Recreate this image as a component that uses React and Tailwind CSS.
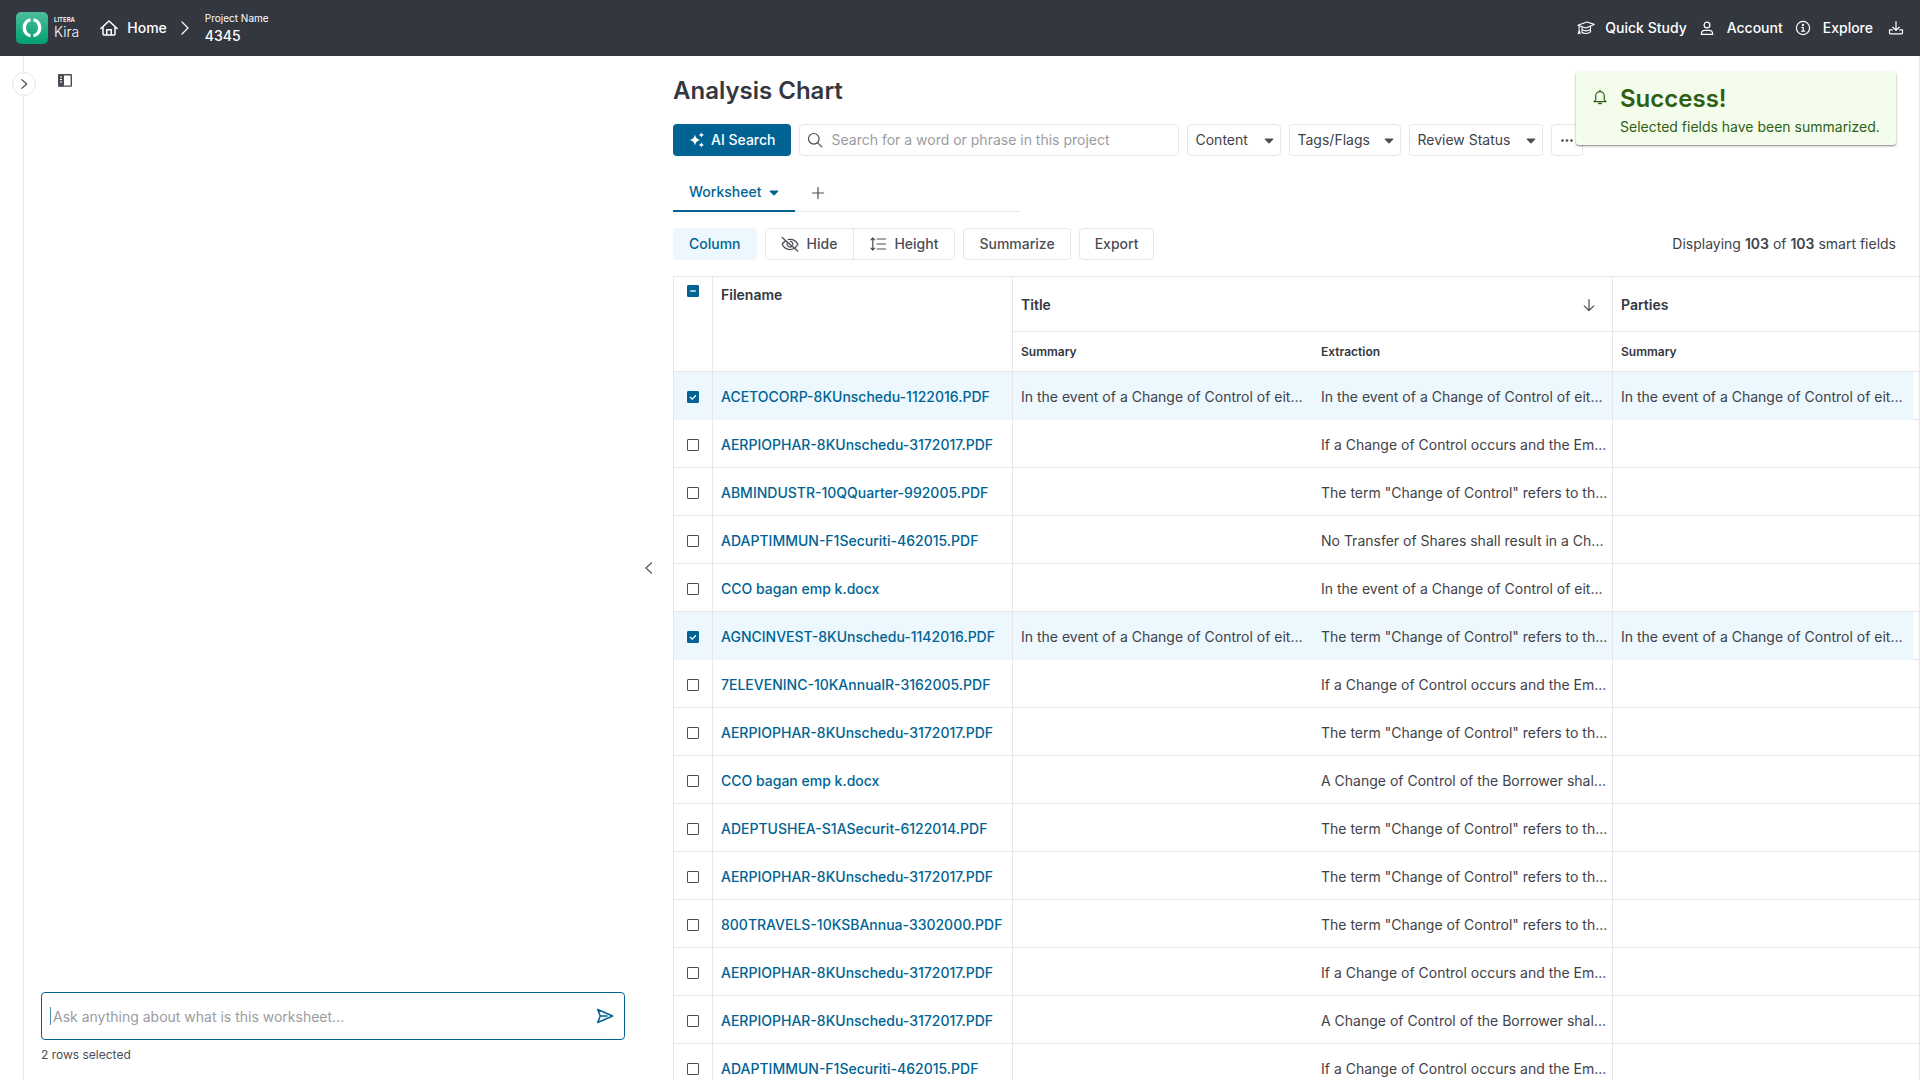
import { useState } from "react";

const rows = [
  { name: "ACETOCORP-8KUnschedu-1122016.PDF", summary: true, text: "In the event of a Change of Control of eit..." },
  { name: "AERPIOPHAR-8KUnschedu-3172017.PDF", text: "If a Change of Control occurs and the Em..." },
  { name: "ABMINDUSTR-10QQuarter-992005.PDF", text: 'The term "Change of Control" refers to th...' },
  { name: "ADAPTIMMUN-F1Securiti-462015.PDF", text: "No Transfer of Shares shall result in a Ch..." },
  { name: "CCO bagan emp k.docx", text: "In the event of a Change of Control of eit..." },
  { name: "AGNCINVEST-8KUnschedu-1142016.PDF", summary: true, text: 'The term "Change of Control" refers to th...' },
  { name: "7ELEVENINC-10KAnnualR-3162005.PDF", text: "If a Change of Control occurs and the Em..." },
  { name: "AERPIOPHAR-8KUnschedu-3172017.PDF", text: 'The term "Change of Control" refers to th...' },
  { name: "CCO bagan emp k.docx", text: "A Change of Control of the Borrower shal..." },
  { name: "ADEPTUSHEA-S1ASecurit-6122014.PDF", text: 'The term "Change of Control" refers to th...' },
  { name: "AERPIOPHAR-8KUnschedu-3172017.PDF", text: 'The term "Change of Control" refers to th...' },
  { name: "800TRAVELS-10KSBAnnua-3302000.PDF", text: 'The term "Change of Control" refers to th...' },
  { name: "AERPIOPHAR-8KUnschedu-3172017.PDF", text: "If a Change of Control occurs and the Em..." },
  { name: "AERPIOPHAR-8KUnschedu-3172017.PDF", text: "A Change of Control of the Borrower shal..." },
  { name: "ADAPTIMMUN-F1Securiti-462015.PDF", text: "If a Change of Control occurs and the Em..." },
];

const summaryText = "In the event of a Change of Control of eit...";

function Icon({ size = 16, children, className = "" }) {
  return (
    <svg
      width={size}
      height={size}
      viewBox="0 0 16 16"
      fill="none"
      stroke="currentColor"
      strokeWidth="1.2"
      strokeLinecap="round"
      strokeLinejoin="round"
      aria-hidden="true"
      className={`shrink-0 ${className}`}
    >
      {children}
    </svg>
  );
}

function Caret({ className = "" }) {
  return (
    <svg width="10" height="6" viewBox="0 0 10 6" aria-hidden="true" className={`shrink-0 ${className}`}>
      <path d="M1.2 0.5h7.6a.6.6 0 0 1 .4 1L5.5 5.3a.7.7 0 0 1-1 0L.8 1.5a.6.6 0 0 1 .4-1z" fill="currentColor" />
    </svg>
  );
}

function Logo() {
  return (
    <div className="flex items-center gap-1.5">
      <svg width="32" height="32" viewBox="0 0 32 32" aria-hidden="true">
        <defs>
          <linearGradient id="logoBg" x1="0" y1="0" x2="0" y2="1">
            <stop offset="0" stopColor="#4dbd9b" />
            <stop offset="1" stopColor="#00a070" />
          </linearGradient>
        </defs>
        <rect width="32" height="32" rx="5" fill="url(#logoBg)" />
        <path
          d="M14.3 6.3C9.8 7 6.6 11 6.6 15.8S9.8 24.5 14.3 25.3L14.8 22.3C11.7 21.6 10 19 10 15.8S11.7 10 14.8 9.3zM17.7 6.3C22.2 7 25.4 11 25.4 15.8S22.2 24.5 17.7 25.3L17.2 22.3C20.3 21.6 22 19 22 15.8S20.3 10 17.2 9.3z"
          fill="#fff"
        />
      </svg>
      <div className="flex flex-col">
        <span className="text-[6px] leading-[8px] font-semibold">LITERA</span>
        <span className="text-sm leading-4 font-light">Kira</span>
      </div>
    </div>
  );
}

function TopBar() {
  return (
    <header className="flex h-14 shrink-0 items-center justify-between bg-[#333740] px-4 text-sm font-medium text-white">
      <div className="flex items-center">
        <Logo />
        <a href="#home" className="ml-5 flex items-center gap-2">
          <Icon size={20}>
            <path d="M1.5 8.4L8 2.4l6.5 6M3.2 7v5.800a.7.7 0 0 0 .7.7h8.200a.7.7 0 0 0 .7-.7V7M6.200 13.400V9.300h3.600v4.100" />
          </Icon>
          Home
        </a>
        <Icon size={16} className="mx-2.5">
          <path d="M5 2l6 6-6 6" />
        </Icon>
        <div className="ml-0.5 flex flex-col">
          <span className="text-[10px] leading-4 font-normal">Project Name</span>
          <span className="leading-5">4345</span>
        </div>
      </div>
      <nav className="flex items-center gap-3">
        <a href="#study" className="flex items-center gap-2.5">
          <Icon size={18}>
            <path
              strokeWidth="1"
              d="M.8 5.600L8.800 2.600l6.500 2.200-7.500 3.200zM1.900 6.200v6.400M1 13l.9-2.500 1 2.500M4.600 7.200l-.3 4.600c1.800 1.600 5.600 1.400 7.700-.3V6.600M4.600 9.600c2.200 1.300 5.200 1 7.400-.5"
            />
          </Icon>
          Quick Study
        </a>
        <a href="#account" className="flex items-center gap-3">
          <Icon size={16}>
            <circle cx="8" cy="5" r="2.900" />
            <path d="M2.300 14.400c0-2.500 1.600-4 3.600-4h4.200c2 0 3.600 1.500 3.600 4z" />
          </Icon>
          Account
        </a>
        <a href="#explore" className="flex items-center gap-3">
          <Icon size={16}>
            <circle cx="8" cy="8" r="6.600" />
            <path d="M6.800 7.300h1.400v3.900M6.600 11.200h3" />
            <circle cx="8" cy="4.900" r=".5" fill="currentColor" />
          </Icon>
          Explore
        </a>
        <button type="button" aria-label="Download" className="ml-[3px]">
          <Icon size={16}>
            <path d="M8 1.500v8.600M4.800 7.200L8 10.300l3.200-3.100M4.300 9.900H1.500v3.200c0 .4.300.7.700.7h11.600c.4 0 .7-.3.700-.7V9.900h-2.800" />
          </Icon>
        </button>
      </nav>
    </header>
  );
}

function ChatPanel({ count }) {
  return (
    <section className="flex w-[601px] shrink-0 flex-col justify-between pl-[17px]">
      <button type="button" aria-label="Toggle panel" className="mt-4 ml-4 self-start text-[#4b4d54]">
        <svg width="16" height="16" viewBox="0 0 16 16" aria-hidden="true">
          <rect x="1.700" y="2.700" width="12.600" height="11.400" rx=".5" fill="none" stroke="currentColor" strokeWidth="1.400" />
          <path fill="currentColor" d="M1.500 2.500h5.500v12h-5.500z" />
          <path stroke="#fff" strokeWidth="1" d="M3 5h2M3 7.500h2M3 10h2" />
        </svg>
      </button>
      <div className="pb-4">
        <div className="flex h-12 items-center rounded border border-[#006394] px-2">
          <span className="h-[18px] w-px shrink-0 bg-[#4a90b5]" />
          <input
            type="text"
            aria-label="Ask about this worksheet"
            placeholder="Ask anything about what is this worksheet..."
            className="ml-0.5 h-8 min-w-0 flex-1 text-sm outline-none placeholder:text-[#9b9c9f]"
          />
          <button type="button" aria-label="Send" className="mr-0.5 text-[#006394]">
            <Icon size={18}>
              <path strokeWidth="1.400" d="M1.500 2.200L14.800 8 1.500 13.800 3.800 8zM3.800 8h6" />
            </Icon>
          </button>
        </div>
        <p className="mt-1.5 text-xs leading-[18px] text-[#4b4d54]">{count} rows selected</p>
      </div>
    </section>
  );
}

function FilterSelect({ label, width }) {
  return (
    <div className={`relative ${width}`}>
      <select
        aria-label={label}
        className="h-8 w-full appearance-none rounded border border-[#e6e6e6] bg-white pl-[7px] text-sm text-[#3f4249]"
      >
        <option>{label}</option>
      </select>
      <Caret className="pointer-events-none absolute top-[14px] right-[7px] text-[#4b4d54]" />
    </div>
  );
}

function SearchRow() {
  return (
    <div className="mt-4 flex gap-2">
      <button
        type="button"
        className="flex h-8 items-center gap-1.5 rounded bg-[#006394] px-4 text-sm font-medium text-white"
      >
        <svg width="16" height="16" viewBox="0 0 16 16" fill="currentColor" aria-hidden="true">
          <path d="M6 2.500C6.900 6 8 7.100 11.300 8 8 8.900 6.900 10 6 13.500 5.100 10 4 8.900.500 8 4 7.100 5.100 6 6 2.500zM12.400.3c.5 1.800.9 2.200 2.700 2.700-1.800.5-2.200.9-2.700 2.700-.5-1.800-.9-2.200-2.700-2.700 1.800-.5 2.200-.9 2.700-2.700zM12.400 10.300c.5 1.800.9 2.200 2.700 2.700-1.800.5-2.200.9-2.700 2.700-.5-1.800-.9-2.200-2.700-2.700 1.800-.5 2.200-.9 2.700-2.700z" />
        </svg>
        AI Search
      </button>
      <label className="flex h-8 w-[380px] items-center gap-2 rounded border border-[#e6e6e6] pl-[7px]">
        <Icon size={16} className="text-[#4b4d54]">
          <circle cx="6.800" cy="6.800" r="5.300" />
          <path d="M10.800 10.800l4 4" />
        </Icon>
        <input
          type="search"
          aria-label="Search project"
          placeholder="Search for a word or phrase in this project"
          className="min-w-0 flex-1 text-sm outline-none placeholder:text-[#9b9c9f]"
        />
      </label>
      <FilterSelect label="Content" width="w-[94px]" />
      <FilterSelect label="Tags/Flags" width="w-28" />
      <FilterSelect label="Review Status" width="w-[134px]" />
      <button
        type="button"
        aria-label="More filters"
        className="flex size-8 items-center justify-center rounded border border-[#e6e6e6] text-[#4b4d54]"
      >
        <svg width="16" height="16" viewBox="0 0 16 16" fill="currentColor" aria-hidden="true">
          <circle cx="3.500" cy="8.500" r="1.300" />
          <circle cx="8" cy="8.500" r="1.300" />
          <circle cx="12.500" cy="8.500" r="1.300" />
        </svg>
      </button>
    </div>
  );
}

function Tabs() {
  return (
    <div className="mt-4 flex h-10 w-[347px] border-b border-[#e6e6e6]">
      <button
        type="button"
        className="-mb-px flex items-center gap-2 border-b-2 border-[#006394] px-4 pt-0.5 text-sm font-medium text-[#006394]"
      >
        Worksheet
        <Caret className="mt-0.5" />
      </button>
      <button type="button" aria-label="Add worksheet" className="px-[15px] pt-0.5 text-[#4b4d54]">
        <Icon size={16}>
          <path d="M8 2.500v11M2.500 8h11" />
        </Icon>
      </button>
    </div>
  );
}

function Toolbar() {
  return (
    <div className="mt-4 flex items-center gap-2 text-sm font-medium text-[#4b4d54]">
      <button type="button" className="h-8 rounded bg-[#ecf8fe] px-4 text-[#006394]">
        Column
      </button>
      <div className="flex h-8 rounded border border-[#e6e6e6]">
        <button type="button" className="flex items-center gap-2 border-r border-[#e6e6e6] pr-4 pl-[15px]">
          <Icon size={18}>
            <path
              strokeWidth="1.100"
              d="M1 2.200l13.800 12M4.300 5C2.700 6 1.600 7.200 1 8.300c1.200 2.500 4 4.600 7 4.600 1.200 0 2.300-.3 3.300-.7M6.400 4c.5-.1 1.100-.2 1.600-.2 3 0 5.800 2 7 4.500-.5 1-1.300 2-2.300 2.800M5.700 6.800c-.9 1.700.2 3.900 2.300 3.900.6 0 1.100-.2 1.500-.5M8.400 5.700a2.500 2.500 0 0 1 2.100 3M7 7.500l1.800 1.700"
            />
          </Icon>
          Hide
        </button>
        <button type="button" className="flex items-center gap-2 px-4">
          <Icon size={16}>
            <path d="M2.800 2v12M1 3.800L2.800 2l1.800 1.800M1 12.200L2.800 14l1.800-1.800M7 3h8.500M7 8h8.500M7 13h8.500" />
          </Icon>
          Height
        </button>
      </div>
      <button type="button" className="h-8 rounded border border-[#e6e6e6] px-[15px]">
        Summarize
      </button>
      <button type="button" className="h-8 rounded border border-[#e6e6e6] px-[15px]">
        Export
      </button>
      <p className="mr-[23px] ml-auto font-normal text-[#3f4249]">
        Displaying <b className="font-semibold">103</b> of <b className="font-semibold">103</b> smart fields
      </p>
    </div>
  );
}

function Checkbox({ checked, indeterminate, onChange, label }) {
  return (
    <label className="relative block size-3">
      <input
        type="checkbox"
        aria-label={label}
        checked={checked}
        onChange={onChange}
        className="peer block size-3 appearance-none rounded-[1px] border border-[#4b4d54] checked:border-[#006394] checked:bg-[#006394]"
      />
      <svg
        width="12"
        height="12"
        viewBox="0 0 12 12"
        fill="none"
        stroke="#fff"
        strokeWidth="1.300"
        aria-hidden="true"
        className="pointer-events-none absolute inset-0 hidden peer-checked:block"
      >
        <path d={indeterminate ? "M3.200 6h5.600" : "M3 6l2.200 2.100L9 4.200"} />
      </svg>
    </label>
  );
}

function Worksheet({ selected, toggle }) {
  const line = "border-[#e6e6e6]";
  return (
    <table className="mt-4 w-full table-fixed border-separate border-spacing-0 text-left text-sm text-[#3f4249]">
      <colgroup>
        <col className="w-[39px]" />
        <col className="w-[300px]" />
        <col className="w-[300px]" />
        <col className="w-[300px]" />
        <col className="w-[301px]" />
        <col />
      </colgroup>
      <thead className="text-[#333740]">
        <tr className="h-14">
          <th rowSpan={2} className={`border-t border-b border-l pt-2 pl-[13px] align-top ${line}`}>
            <Checkbox checked indeterminate onChange={() => {}} label="Select all rows" />
          </th>
          <th rowSpan={2} className={`border-t border-b border-l px-2 pt-2 align-top font-semibold ${line}`}>
            Filename
          </th>
          <th colSpan={2} className={`border-t border-b border-l px-2 pt-0.5 font-semibold ${line}`}>
            <div className="flex items-center justify-between pr-[7px]">
              Title
              <button type="button" aria-label="Sort by title" className="text-[#4b4d54]">
                <Icon size={16}>
                  <path d="M8 2.500v11M3.200 8.900L8 13.500l4.800-4.600" />
                </Icon>
              </button>
            </div>
          </th>
          <th colSpan={2} className={`border-t border-b border-l px-2 pt-0.5 font-semibold ${line}`}>
            Parties
          </th>
        </tr>
        <tr className="h-10 text-xs">
          <th className={`border-b border-l px-2 font-semibold ${line}`}>Summary</th>
          <th className={`border-b px-[9px] font-semibold ${line}`}>Extraction</th>
          <th colSpan={2} className={`border-b border-l px-2 font-semibold ${line}`}>
            Summary
          </th>
        </tr>
      </thead>
      <tbody>
        {rows.map((row, i) => {
          const on = selected.includes(i);
          const cell = on
            ? "border-b border-b-[#ecf8fe] bg-[#ecf8fe] pt-0.5 whitespace-nowrap"
            : "border-b border-b-[#e6e6e6] pt-0.5 whitespace-nowrap";
          return (
            <tr key={i} className="h-12">
              <td className={`border-l border-l-[#e6e6e6] pl-[13px] ${cell}`}>
                <Checkbox checked={on} onChange={() => toggle(i)} label={`Select row ${i + 1}`} />
              </td>
              <td className={`border-l border-l-[#e6e6e6] px-2 font-medium ${cell}`}>
                <a href="#file" className="text-[#006394]">
                  {row.name}
                </a>
              </td>
              <td className={`border-l border-l-[#e6e6e6] px-2 ${cell}`}>{row.summary && summaryText}</td>
              <td className={`px-[9px] ${cell}`}>{row.text}</td>
              <td className={`border-l border-l-[#e6e6e6] px-2 ${cell}`}>{row.summary && summaryText}</td>
              <td className="border-b border-[#e6e6e6]" />
            </tr>
          );
        })}
      </tbody>
    </table>
  );
}

function Toast() {
  return (
    <div
      role="status"
      className="absolute top-[72px] right-6 flex w-80 gap-[11px] rounded-[3px] bg-[#f4fdec] px-4 pt-[11px] pb-1.5 text-[#2f5f13] shadow-[0_1px_2px_rgba(0,0,0,0.5)]"
    >
      <Icon size={16} className="mt-1.5">
        <path d="M8 1.200v1.200M3.700 10.800V7a4.300 4.300 0 0 1 8.600 0v3.800l1.600 1.900H2.100z" />
        <path d="M6.800 14.500h2.400" strokeWidth="1.600" />
      </Icon>
      <div className="pl-px">
        <h2 className="text-2xl leading-8 font-semibold">Success!</h2>
        <p className="text-sm leading-6">Selected fields have been summarized.</p>
      </div>
    </div>
  );
}

export default function App() {
  const [selected, setSelected] = useState([0, 5]);

  const toggle = (i) => {
    setSelected((prev) => (prev.includes(i) ? prev.filter((n) => n !== i) : [...prev, i]));
  };

  return (
    <div className="relative flex h-screen flex-col overflow-hidden bg-white font-['Inter',sans-serif]">
      <TopBar />
      <div className="flex min-h-0 flex-1 border-r border-[#e6e6e6]">
        {/* collapsed rail with its toggle */}
        <aside className="relative w-6 shrink-0 border-r border-[#e6e6e6]">
          <button
            type="button"
            aria-label="Open sidebar"
            className="absolute top-4 -right-[13px] flex size-6 items-center justify-center rounded-full border border-[#e6e6e6] bg-white text-[#4b4d54]"
          >
            <Icon size={14}>
              <path strokeWidth="1.400" d="M5.500 3l5.500 5-5.500 5" />
            </Icon>
          </button>
        </aside>
        <ChatPanel count={selected.length} />
        <button
          type="button"
          aria-label="Collapse panel"
          className="flex w-12 shrink-0 items-center justify-center self-center text-[#4b4d54]"
        >
          <Icon size={14}>
            <path d="M11 2L4.500 8l6.500 6" />
          </Icon>
        </button>
        <main className="min-w-0 flex-1 pt-[18px]">
          <h1 className="text-2xl leading-[34px] font-semibold text-[#333740]">Analysis Chart</h1>
          <SearchRow />
          <Tabs />
          <Toolbar />
          <Worksheet selected={selected} toggle={toggle} />
        </main>
      </div>
      <Toast />
    </div>
  );
}
